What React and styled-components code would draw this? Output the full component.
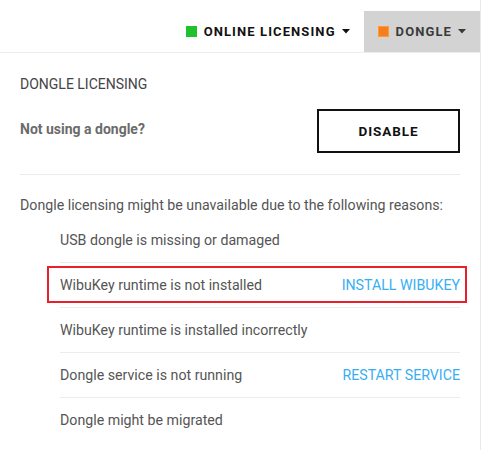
import React from "react";
import styled, { createGlobalStyle } from "styled-components";

const GlobalStyle = createGlobalStyle`
body {
    margin: 0;
    background: #fff;
    font-family: Roboto, "Liberation Sans", sans-serif;
}
`;

const reasons = [
    { text: "USB dongle is missing or damaged" },
    { text: "WibuKey runtime is not installed", action: "INSTALL WIBUKEY", marked: true },
    { text: "WibuKey runtime is installed incorrectly" },
    { text: "Dongle service is not running", action: "RESTART SERVICE" },
    { text: "Dongle might be migrated" },
];

const Caret = () => (
    <svg width="8" height="5" viewBox="0 0 8 5">
        <path d="M0 0 L8 0 L4 4.5 Z" fill="currentColor" />
    </svg>
);

const App = () => {
    return (
        <>
        <GlobalStyle/>
        <Panel>
            <Header>
                <Tab>
                    <Dot color="#1fc22c" edge="#1fc22c"/>
                    ONLINE LICENSING
                    <Caret/>
                </Tab>
                <Tab active>
                    <Dot color="#f57f1f" edge="#ff9b2f"/>
                    DONGLE
                    <Caret/>
                </Tab>
            </Header>
            <Body>
                <Title>DONGLE LICENSING</Title>
                <DisableRow>
                    <Question>Not using a dongle?</Question>
                    <OutlineBtn>DISABLE</OutlineBtn>
                </DisableRow>
                <Divider/>
                <Intro>Dongle licensing might be unavailable due to the following reasons:</Intro>
                <List>
                    {reasons.map((r) => (
                        <Item key={r.text} marked={r.marked}>
                            <span>{r.text}</span>
                            {r.action && <Action>{r.action}</Action>}
                        </Item>
                    ))}
                </List>
            </Body>
        </Panel>
        </>
    )
}

const Panel = styled.div`
width: 480px;
min-height: 450px;
border-right: 1px solid #e9e9e9;
box-sizing: content-box;
`;

const Header = styled.div`
height: 52px;
display: flex;
justify-content: flex-end;
align-items: flex-end;
border-bottom: 1px solid #ececec;
`;

const Tab = styled.div`
height: 41px;
display: flex;
align-items: center;
gap: 6px;
padding: 0 14px 0 14px;
font-size: 13px;
font-weight: 700;
letter-spacing: 1.1px;
color: ${p => p.active ? "#3a3a3a" : "#111"};
background: ${p => p.active ? "#d3d3d3" : "transparent"};
`;

const Dot = styled.span`
width: 9px;
height: 9px;
background: ${p => p.color};
border: 1px solid ${p => p.edge};
margin-right: 1px;
`;

const Body = styled.div`
padding: 0 20px;
`;

const Title = styled.div`
margin-top: 23px;
font-size: 14px;
line-height: 16px;
color: #444;
`;

const DisableRow = styled.div`
display: flex;
justify-content: space-between;
align-items: center;
margin-top: 17px;
`;

const Question = styled.span`
font-size: 14px;
font-weight: 700;
color: #6b6b6b;
margin-top: -4px;
`;

const OutlineBtn = styled.button`
width: 143px;
height: 44px;
background: #fff;
border: 2px solid #111;
font-family: inherit;
font-size: 13.5px;
font-weight: 700;
letter-spacing: 0.9px;
color: #111;
`;

const Divider = styled.div`
margin-top: 21px;
border-top: 1px solid #ececec;
`;

const Intro = styled.div`
margin-top: 20px;
font-size: 14.2px;
line-height: 20px;
color: #555;
`;

const List = styled.ul`
list-style: none;
margin: 3px 0 0 40px;
padding: 0;
`;

const Item = styled.li`
position: relative;
height: 44px;
display: flex;
align-items: center;
justify-content: space-between;
font-size: 14.2px;
color: #555;
border-bottom: 1px solid #ececec;
&:last-child {
    border-bottom: none;
}
${p => p.marked && `
&::after {
    content: "";
    position: absolute;
    top: 3px;
    bottom: 4px;
    left: -13px;
    right: -7px;
    border: 2px solid #e8202a;
}
`}
`;

const Action = styled.span`
color: #38aef2;
`;

export default App;
